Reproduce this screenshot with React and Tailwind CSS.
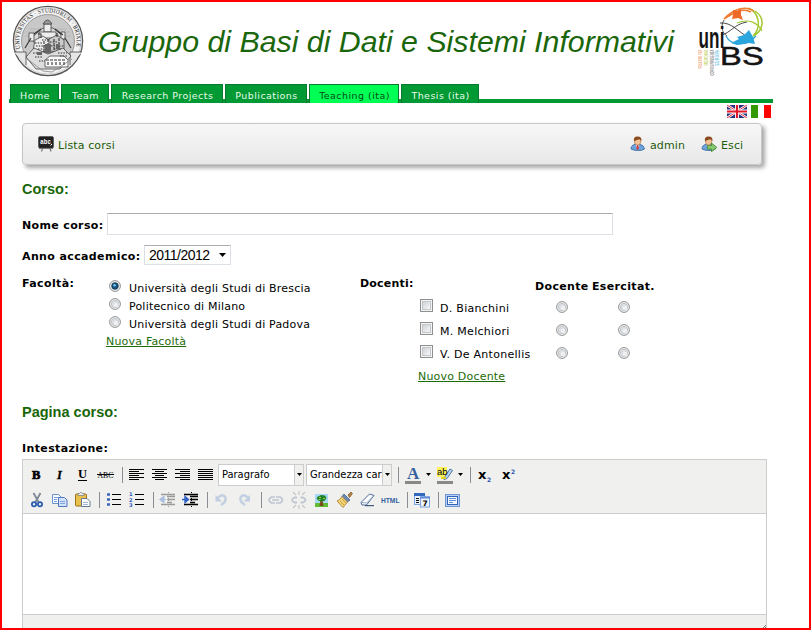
import React from "react";

const VERDANA = "font-['DejaVu_Sans','Noto_Sans',sans-serif]";
const ARIAL = "font-['Liberation_Sans',sans-serif]";

function Seal() {
  return (
    <svg width="72" height="72" viewBox="0 0 72 72">
      <defs>
        <path id="sealRing" d="M 8.7 44.6 A 28.6 28.6 0 1 1 63.3 44.6" />
      </defs>
      <circle cx="36" cy="36" r="34.6" fill="#f2f2f2" stroke="#555" strokeWidth="1.3" />
      <circle cx="36" cy="36" r="33" fill="none" stroke="#bbb" strokeWidth="0.6" />
      <circle cx="36" cy="36" r="26.5" fill="#c8c8c8" stroke="#888" strokeWidth="0.8" />
      <text fontSize="6.2" fill="#222" className="font-['Liberation_Serif',serif]">
        <textPath href="#sealRing" textLength="103" lengthAdjust="spacingAndGlyphs" startOffset="1">UNIVERSITAS · STUDIORUM · BRIXIÆ</textPath>
      </text>
      <path d="M14 27h44M13 31h46M17 24h38" stroke="#b2b2b2" strokeWidth="0.8" />
      <g stroke="#444" strokeWidth="0.8" fill="#ededed">
        <path d="M19 33l12-10h10l12 10-4 6H23z" fill="#dadada" />
        <path d="M32 27v-8h7v8z" />
        <path d="M31 19q4.500-8 9 0z" fill="#999" />
        <path d="M27 33v-6h17v6zM17 36v-8h5v8zM49 34v-7h4v7z" />
        <path d="M21 46l2-11 8-4 7 5v11z" />
        <path d="M37 46V34l8-4 7 5v12z" fill="#ccc" />
        <path d="M2 47h12v13M70 47H58v13" fill="#e6e6e6" />
        <path d="M14 52l8-9 14 6 15-6 8 8-11 13H24z" fill="#ddd" />
        <path d="M33 62v-7l5-4h14l4 4v7z" fill="#fafafa" />
        <path d="M14 53l17 13 9 1 20-13" fill="none" stroke="#888" />
      </g>
      <g stroke="#333" strokeWidth="1.1" fill="none">
        <path d="M23 38h8M24 41h10M26 44h8M38 37h8M39 41h13M42 44h8M30 35h5M21 48h9M23 52h8M27 56h6M46 48h9M48 51h8" strokeDasharray="1.5 1.2" />
        <path d="M36 57v4M40 57v4M44 57v4M48 57v4M52 57v4M34 55h20M32 36v12M36 34v14M42 34v12M47 33v12" strokeDasharray="3 1" />
        <path d="M22 29l7-5M43 24l8 6M19 33l-6 10M53 33l6 10M26 29h3v4M45 28v4" />
      </g>
      <path d="M33 39h6v9h-6zM25 47h5v3h-5zM44 39h3v5h-3z" fill="#666" />
    </svg>
  );
}

function UniBsLogo() {
  return (
    <svg width="72" height="72" viewBox="0 0 72 72">
      <g fill="none">
        <path d="M22 18C34 17 40 27 50 32" stroke="#333" strokeWidth="0.9" />
        <path d="M23 30C33 28 36 19 49 17" stroke="#333" strokeWidth="0.9" />
        <path d="M26 15C23 20 23 27 29 31" stroke="#333" strokeWidth="0.8" />
        <path d="M50 3C61 7 64 22 55 31C64 27 69 14 57 6" stroke="#a4c832" strokeWidth="1.5" />
        <path d="M39 18C51 13 60 18 64 26" stroke="#a4c832" strokeWidth="1.2" />
        <path d="M56 6C48 0 35 4 26 14C34 9 44 2 53 7" stroke="#ef7d32" strokeWidth="1.5" />
        <path d="M28 31C33 41 48 42 58 31" stroke="#2aa5de" strokeWidth="1.3" />
      </g>
      <path d="M35 5l4 1 4-2v6l2 5-5-2-6 1 1-4z" fill="#ee6a28" />
      <path d="M51 25l4 7 2 7-6-1-12 2-6-2 8-4-2-2 7-2z" fill="#2aa5de" />
      <text x="0.5" y="43" fontSize="30" fontWeight="700" fill="#151515" textLength="26" lengthAdjust="spacingAndGlyphs" className="font-['Liberation_Sans',sans-serif]">uni</text>
      <text x="22" y="60" fontSize="25" fill="#151515" stroke="#151515" strokeWidth="0.5" textLength="44" lengthAdjust="spacingAndGlyphs" className="font-['Liberation_Sans',sans-serif]">BS</text>
      <g fontSize="4.6" className="font-['Liberation_Sans',sans-serif]" fontWeight="700">
        <text transform="translate(4.4 63.5) rotate(-90)" fill="#eea678" textLength="19" lengthAdjust="spacingAndGlyphs">PASSATO PER</text>
        <text transform="translate(10 60.5) rotate(-90)" fill="#c5d56a" textLength="16" lengthAdjust="spacingAndGlyphs">MEMORIA</text>
        <text transform="translate(15.800 70.5) rotate(-90)" fill="#8a8a8a" textLength="26" lengthAdjust="spacingAndGlyphs">CORRISPONDENZA</text>
        <text transform="translate(21.400 60.5) rotate(-90)" fill="#7cc6e8" textLength="16" lengthAdjust="spacingAndGlyphs">EUROPA</text>
      </g>
    </svg>
  );
}

function UkFlag() {
  return (
    <svg width="20" height="13" viewBox="0 0 20 13">
      <rect width="20" height="13" fill="#26307a" />
      <path d="M0 0l20 13M20 0L0 13" stroke="#fff" strokeWidth="2.4" />
      <path d="M0 0l20 13M20 0L0 13" stroke="#e0182c" strokeWidth="0.9" />
      <path d="M10 0v13M0 6.5h20" stroke="#fff" strokeWidth="4" />
      <path d="M10 0v13M0 6.5h20" stroke="#e0182c" strokeWidth="2.2" />
    </svg>
  );
}

function BoardIcon() {
  return (
    <svg width="16" height="16" viewBox="0 0 16 16">
      <rect x="0.5" y="0.5" width="15" height="11.5" rx="1.5" fill="#222" stroke="#444" strokeWidth="0.6" />
      <path d="M1 12.5h14M4.500 12.5L3.500 15.500M12 12.5l1 3" stroke="#777" strokeWidth="1.2" />
      <text x="2.300" y="7.500" fontSize="7" fontWeight="700" fill="#fff" textLength="10.500" lengthAdjust="spacingAndGlyphs" className="font-['Liberation_Sans',sans-serif]">abc</text>
      <path d="M12.5 9.5l1.5-1.5" stroke="#fff" />
    </svg>
  );
}

function UserIcon({ leaving }) {
  return (
    <svg width="16" height="16" viewBox="0 0 16 16">
      <path d="M1 13q0-4 4.5-4.800h4Q14 9 14.500 13q-3 2-7 1.500-3.500 0-6.500-1.500z" fill="#6ea3db" stroke="#33659f" strokeWidth="0.8" />
      <path d="M5.500 8.500L7.500 13l2-4.500z" fill="#e6eefa" />
      {!leaving && <path d="M7 9h1.200l.6 3.500-1.200 1.500-1.200-1.500z" fill="#d8323c" />}
      <ellipse cx="7.600" cy="5.300" rx="3.200" ry="3.800" fill="#f3c295" stroke="#a4683a" strokeWidth="0.6" />
      <path d="M4 5.200Q3 .6 7.500.6 12.300.6 11.300 5.200 10.500 3.200 9 3.200 6 4 4 5.200z" fill="#8a4a1c" />
      {leaving && (
        <path d="M6.500 9.500h4V7l5.300 4.400-5.300 4.300v-2.500h-4z" fill="#86c96c" stroke="#3b842c" strokeWidth="0.8" />
      )}
    </svg>
  );
}

function Radio({ checked }) {
  return (
    <svg width="12" height="12" viewBox="0 0 12 12" className="block shrink-0">
      <circle cx="6" cy="6" r="5.400" fill="#f6f6f6" stroke="#8e8f8f" strokeWidth="1" />
      <circle cx="6" cy="6" r="3.700" fill="#dcdfe3" stroke="#b9bdc3" strokeWidth="0.8" />
      <circle cx="7" cy="7" r="2.300" fill="#eff0f1" />
      {checked && <circle cx="6" cy="6" r="3.200" fill="#17547e" stroke="#12344f" strokeWidth="0.8" />}
      {checked && <circle cx="5.500" cy="5.200" r="1.300" fill="#6cc9f0" />}
    </svg>
  );
}

function Checkbox() {
  return (
    <span className="block h-[13px] w-[13px] shrink-0 border border-[#8e8f8f] bg-[#f4f4f4] p-px">
      <span className="block h-full w-full border border-[#c3c7cc] bg-linear-to-br from-[#cdd1d8] to-[#f8f8f8]" />
    </span>
  );
}

function Cell({ children, faded }) {
  return (
    <span className={faded ? "block h-5 w-[23px] opacity-35" : "block h-5 w-[23px]"}>
      <svg width="23" height="20" viewBox="0 0 23 20" className="block">
        {children}
      </svg>
    </span>
  );
}

function Sep() {
  return (
    <span className="flex h-4 w-2 pl-[5px]">
      <span className="block h-4 w-px bg-[#8c8c94]" />
    </span>
  );
}

function Align({ d }) {
  return (
    <Cell>
      <path d={d} stroke="#000" strokeWidth="1" />
    </Cell>
  );
}

function EditorSelect({ label }) {
  return (
    <span className="flex h-[22px] w-[86px] border border-[#ccc] bg-white">
      <span className="w-[75px] overflow-hidden pl-[3px] text-[11px] leading-[20px] tracking-normal whitespace-nowrap [font-stretch:condensed] font-['DejaVu_Sans_Condensed','DejaVu_Sans',sans-serif]">
        {label}
      </span>
      <span className="flex w-[9px] items-center justify-center border-l border-[#ccc] bg-[#f0f0ee]">
        <svg width="5" height="3"><path d="M0 0h5L2.500 3z" /></svg>
      </span>
    </span>
  );
}

function Caret() {
  return <svg width="5" height="3" className="mt-[8px] block"><path d="M0 0h5L2.500 3z" /></svg>;
}

const Serif = "font-['Liberation_Serif',serif]";

function EditorToolbar() {
  return (
    <div className="h-[53px] bg-[#f0f0ee] pt-[2px] pl-[2px] tracking-normal">
      <div className="flex h-[25px] items-center">
        <Cell><text x="7" y="13.500" fontSize="12.500" fontWeight="700" stroke="#000" strokeWidth="0.700" className={Serif}>B</text></Cell>
        <Cell><text x="9" y="13.500" fontSize="12.500" fontWeight="700" fontStyle="italic" stroke="#000" strokeWidth="0.300" className={Serif}>I</text></Cell>
        <Cell>
          <text x="7" y="13" fontSize="12.500" fontWeight="700" className={Serif}>U</text>
          <path d="M7 15.500h9" stroke="#000" />
        </Cell>
        <Cell>
          <text x="3.500" y="12.500" fontSize="9" textLength="16" lengthAdjust="spacingAndGlyphs" className={Serif}>ABC</text>
          <path d="M3 9.500h17" stroke="#000" />
        </Cell>
        <Sep />
        <Align d="M4 4.500h15M4 6.500h10M4 8.500h15M4 10.500h10M4 12.500h15M4 14.500h10" />
        <Align d="M4 4.500h15M7 6.500h9M4 8.500h15M7 10.500h9M4 12.500h15M7 14.500h9" />
        <Align d="M4 4.500h15M9 6.500h10M4 8.500h15M9 10.500h10M4 12.500h15M9 14.500h10" />
        <Align d="M4 4.500h15M4 6.500h15M4 8.500h15M4 10.500h15M4 12.500h15M4 14.500h15" />
        <span className="ml-px flex gap-[2px]">
          <EditorSelect label="Paragrafo" />
          <EditorSelect label="Grandezza carattere" />
        </span>
        <span className="ml-px flex"><Sep /></span>
        <span className="flex w-8 pl-1">
          <svg width="16" height="20" viewBox="0 0 16 20" className="mr-[5px] block">
            <text x="2" y="13.500" fontSize="17" fontWeight="700" fill="#39619f" className={Serif}>A</text>
            <path d="M0 17.500h16" stroke="#888" strokeWidth="3" />
          </svg>
          <Caret />
        </span>
        <span className="flex w-8 pl-1">
          <svg width="17" height="20" viewBox="0 0 17 20" className="mr-1 block">
            <rect x="0" y="2" width="10" height="10" fill="#fbf25c" />
            <path d="M7 13l6-9 2.500 1.500-5.500 8-3 1z" fill="#b6d4f0" stroke="#446b96" strokeWidth="0.900" />
            <path d="M4 13h5" stroke="#e2cd2c" strokeWidth="2" />
            <text x="0" y="9.500" fontSize="9.500" className={ARIAL}>ab</text>
            <path d="M0 17.500h16" stroke="#888" strokeWidth="3" />
          </svg>
          <Caret />
        </span>
        <Sep />
        <Cell>
          <text x="5" y="13.500" fontSize="13" fontWeight="700" className={VERDANA}>x</text>
          <text x="14" y="16.500" fontSize="6" fontWeight="700" fill="#2753b5" className={VERDANA}>2</text>
        </Cell>
        <Cell>
          <text x="6" y="14" fontSize="13" fontWeight="700" className={VERDANA}>x</text>
          <text x="15" y="8.500" fontSize="6" fontWeight="700" fill="#2753b5" className={VERDANA}>2</text>
        </Cell>
      </div>
      <div className="flex h-[26px] items-center">
        <Cell>
          <path d="M8.500 3l5 9M15.500 3l-5 9" stroke="#7d8896" strokeWidth="1.800" />
          <circle cx="9" cy="14.300" r="2.100" fill="none" stroke="#2a5db0" strokeWidth="1.800" />
          <circle cx="15" cy="14.300" r="2.100" fill="none" stroke="#2a5db0" strokeWidth="1.800" />
        </Cell>
        <Cell>
          <path d="M4.500 4.500h6l2.500 2.500v6.500H4.500z" fill="#f4f8ff" stroke="#6c91cc" />
          <path d="M10.500 7.500h6l2.500 2.500v6.500h-8.500z" fill="#d3e3fc" stroke="#4c77be" />
          <path d="M6 7.500h4M6 9.500h3M6 11.500h3M12 11.500h5M12 13.500h5" stroke="#7fa4dc" />
        </Cell>
        <Cell>
          <rect x="4.500" y="4" width="11" height="12" rx="1" fill="#e8c04e" stroke="#9b741b" />
          <path d="M7 5.500V3.500h1.500q1.500-2.500 3 0H13v2z" fill="#eee" stroke="#777" strokeWidth="0.700" />
          <path d="M10.500 8.500h5.500l3 3v5h-8.500z" fill="#fff" stroke="#657891" />
          <path d="M12 12.500h5M12 14.500h5" stroke="#9db7df" />
        </Cell>
        <Sep />
        <Cell>
          <path d="M10 4.500h9M10 9.500h9M10 14.500h9" stroke="#000" />
          <path d="M5 4.500h3M5 9.500h3M5 14.500h3" stroke="#3a66bd" strokeWidth="2.600" />
        </Cell>
        <Cell>
          <path d="M10 4.500h9M10 9.500h9M10 14.500h9" stroke="#000" />
          <g fontSize="5.200" fontWeight="700" fill="#2f5cb8" className={VERDANA}>
            <text x="4" y="6">1</text><text x="4" y="11.500">2</text><text x="4" y="17">3</text>
          </g>
        </Cell>
        <Sep />
        <Cell faded>
          <path d="M5 4.500h14M11 6.500h8M11 9.500h8M11 12.500h5M5 14.500h14" stroke="#000" strokeWidth="1.300" />
          <path d="M12.500 2v16" stroke="#000" strokeDasharray="1 1" />
          <path d="M3.500 9.500L8 6v7zM8 9.500h2" fill="#2f62c4" stroke="#2f62c4" />
        </Cell>
        <Cell>
          <path d="M5 4.500h14M11 6.500h8M11 9.500h8M11 12.500h5M5 14.500h14" stroke="#000" strokeWidth="1.300" />
          <path d="M12.500 2v16" stroke="#000" strokeDasharray="1 1" />
          <path d="M9.500 9.500L6 6.500v6zM3 9.500h3" fill="#2f62c4" stroke="#2f62c4" strokeWidth="1.400" />
        </Cell>
        <Sep />
        <Cell faded>
          <path d="M8 7.500Q13 3 15.500 7.500 16.500 12 11 15" fill="none" stroke="#6c93cd" strokeWidth="2.400" />
          <path d="M5.500 5v6.500h6.500z" fill="#6c93cd" />
        </Cell>
        <Cell faded>
          <path d="M15 7.500Q10 3 7.500 7.500 6.500 12 12 15" fill="none" stroke="#6c93cd" strokeWidth="2.400" />
          <path d="M17 5v6.500h-6.500z" fill="#6c93cd" />
        </Cell>
        <Sep />
        <Cell faded>
          <path d="M11 7H7.500q-5 3 0 6H11M12 7h4q5 3 0 6h-4M8 10h7" fill="none" stroke="#64799c" strokeWidth="1.700" />
        </Cell>
        <Cell faded>
          <path d="M10 7.500H7.500q-5 2.500 0 5H10M13.500 7.500H16q5 2.500 0 5h-2.500" fill="none" stroke="#64799c" strokeWidth="1.800" />
          <path d="M6 2l3 3M12 1v4M18 2l-3 3M6 18l3-3M12 19v-4M18 18l-3-3" stroke="#777" strokeWidth="1.100" />
        </Cell>
        <Cell>
          <rect x="5" y="4" width="13" height="13" fill="#a9d8fb" />
          <rect x="5" y="13" width="13" height="4" fill="#60bd33" />
          <path d="M10.500 10h2l1 6h-4z" fill="#7a4b1c" />
          <path d="M8 6.500l3-1.500 4 .5 1.500 2.500-2 3-4 .5-3-1.500-1-2z" fill="#238225" />
          <path d="M9 7.500h2M13 8.500h2M8.500 9.500h2" stroke="#91d14b" strokeWidth="1.200" />
        </Cell>
        <Cell>
          <path d="M15 5l3-3 1.500 1.500-3 4z" fill="#b38444" stroke="#765125" strokeWidth="0.700" />
          <path d="M11 4l6 6-2.500 2L9 6.500z" fill="#6d89b8" stroke="#3c5680" strokeWidth="0.700" />
          <path d="M9 6.500l5.500 5.500L10 17.500 4 11q3-1 5-4.500z" fill="#f3d575" stroke="#a37b2c" strokeWidth="0.800" />
          <path d="M7 11l4 4M9 9l4 4" stroke="#ba9139" strokeWidth="0.800" />
        </Cell>
        <Cell>
          <path d="M5 12.500L13.500 4l4.500 1.500-7.500 9.500H6z" fill="#fff" stroke="#4d6796" />
          <path d="M5 12.500l5.500.5L18 5.500" fill="none" stroke="#8fa5ca" />
          <path d="M9 15.700h9" stroke="#223b69" />
        </Cell>
        <Cell>
          <text x="2" y="12.500" fontSize="6.500" fontWeight="700" fill="#315f9d" textLength="18.500" lengthAdjust="spacingAndGlyphs" className={ARIAL}>HTML</text>
        </Cell>
        <Sep />
        <Cell>
          <rect x="4.500" y="3.500" width="10" height="11" fill="#eaf1fc" stroke="#7da3dc" />
          <path d="M4 4.500h11" stroke="#3569bd" strokeWidth="3" />
          <path d="M6 8.500h3M6 10.500h3M6 12.500h3" stroke="#111" strokeWidth="1.200" />
          <rect x="10.500" y="7" width="9" height="10" fill="#eef4fd" stroke="#7da3dc" />
          <path d="M10 7.500h10" stroke="#5b8ad4" strokeWidth="2" />
          <text x="12.500" y="15.800" fontSize="7.500" fontWeight="700" className={VERDANA}>7</text>
        </Cell>
        <Sep />
        <Cell>
          <rect x="4.500" y="4.500" width="14" height="12" fill="#b6d1f8" stroke="#6f97d8" />
          <rect x="6.500" y="6.500" width="10" height="8" fill="#f5f9ff" stroke="#3464b4" />
          <path d="M8 8.500h7M8 10.500h7M8 12.500h4" stroke="#5e8ed9" />
        </Cell>
      </div>
    </div>
  );
}

const tabs = [
  { label: "Home", cls: "w-[49px]" },
  { label: "Team", cls: "w-[48px]" },
  { label: "Research Projects", cls: "w-[112px]" },
  { label: "Publications", cls: "w-[82px]" },
  { label: "Teaching (ita)", cls: "w-[90px]", active: true },
  { label: "Thesis (ita)", cls: "w-[78px]" },
];

function Tab({ label, cls, active }) {
  const tone = active ? "bg-[#00ff55] text-[#064a1a]" : "bg-[#009933] text-[#e8fbe8]";
  return (
    <a className={`${cls} ${tone} block h-[19px] border border-b-0 border-[#087a2d] pt-[3px] pl-px text-center text-[9.5px] leading-[15px] tracking-[0.45px] whitespace-nowrap`}>
      {label}
    </a>
  );
}

const faculties = ["Università degli Studi di Brescia", "Politecnico di Milano", "Università degli Studi di Padova"];
const teachers = ["D. Bianchini", "M. Melchiori", "V. De Antonellis"];

export default function App() {
  return (
    <div className={`${VERDANA} h-[630px] w-[811px] overflow-hidden border-2 border-[#ff0000] bg-white text-[11px] leading-[14px] tracking-[0.2px] text-black`}>
      <header className="flex h-[82px] pt-[3px] pl-[10px]">
        <Seal />
        <h1 className={`${ARIAL} ml-[14px] w-[600px] pt-[18px] text-[30.3px] leading-[38px] tracking-normal whitespace-nowrap text-[#1a660a] italic`}>
          Gruppo di Basi di Dati e Sistemi Informativi
        </h1>
        <UniBsLogo />
      </header>

      <nav className="ml-[7px] flex h-[19px] w-[764px] gap-[2px] bg-[linear-gradient(#009933,#009933)] bg-[length:100%_4px] bg-bottom bg-no-repeat pl-px">
        {tabs.map((t) => <Tab key={t.label} {...t} />)}
      </nav>

      <div className="flex h-5 w-[769px] justify-end gap-1 pt-[2px]">
        <UkFlag />
        <span className="flex h-[13px] w-5 bg-white">
          <span className="w-[7px] bg-[#339900]" />
          <span className="w-[6px]" />
          <span className="w-[7px] bg-[#ff0000]" />
        </span>
      </div>

      <main className="pl-5">
        <div className="flex h-[42px] w-[740px] items-center rounded-[4px] border border-[#c6c6c6] bg-linear-to-b from-[#f7f7f7] to-[#e8e8e8] pl-[15px] tracking-[0.12px] text-[#1e5c0a] shadow-[3px_3px_4px_rgba(0,0,0,0.35)]">
          <BoardIcon />
          <span className="ml-1 w-[572px] pt-[3px]">Lista corsi</span>
          <UserIcon />
          <span className="ml-1 w-[51px] pt-[3px]">admin</span>
          <UserIcon leaving />
          <span className="ml-1 pt-[3px]">Esci</span>
        </div>

        <h2 className={`${ARIAL} mt-[15px] text-[14.5px] leading-[18px] font-bold tracking-normal text-[#1a660a]`}>Corso:</h2>

        <div className="mt-[15px] flex h-[22px]">
          <label className="w-[85px] pt-[6px] font-bold tracking-[0.36px] whitespace-nowrap">Nome corso:</label>
          <span className="block w-[506px] border border-[#dbdfe6] border-t-[#abadb3] bg-white" />
        </div>

        <div className="mt-[10px] flex h-5">
          <label className="w-[122px] pt-[5px] font-bold tracking-[0.38px] whitespace-nowrap">Anno accademico:</label>
          <span className={`${ARIAL} flex w-[87px] items-center justify-between border border-[#dbdfe6] border-t-[#abadb3] pr-1 pl-1 text-[14px] tracking-[-0.5px]`}>
            2011/2012
            <svg width="7" height="4"><path d="M0 0h7L3.500 4z" /></svg>
          </span>
        </div>

        <div className="mt-[11px] flex h-[107px]">
          <div className="w-[84px] pt-px font-bold tracking-[0.38px]">Facoltà:</div>
          <div className="w-[254px] pt-px">
            {faculties.map((f, i) => (
              <div key={f} className="flex h-[18px] pl-[3px]">
                <span className="mt-[3px] mr-2"><Radio checked={i === 0} /></span>
                <span className="pt-[5px] whitespace-nowrap">{f}</span>
              </div>
            ))}
            <a className="mt-1 block text-[#1e6b0a] underline">Nuova Facoltà</a>
          </div>
          <div className="w-[58px] pt-px font-bold whitespace-nowrap">Docenti:</div>
          <div className="pt-1">
            <div className="flex h-4 pl-[117px] font-bold tracking-[0.35px]">
              <span className="w-[57px]">Docente</span>
              <span>Esercitat.</span>
            </div>
            {teachers.map((t) => (
              <div key={t} className="flex h-[23px] pl-[2px]">
                <span className="mt-[3px]"><Checkbox /></span>
                <span className="ml-[7px] w-[116px] pt-[6px] tracking-[0.28px] whitespace-nowrap">{t}</span>
                <span className="w-[62px] pt-[5px]"><Radio /></span>
                <span className="pt-[5px]"><Radio /></span>
              </div>
            ))}
            <a className="mt-[5px] block text-[#1e6b0a] underline">Nuovo Docente</a>
          </div>
        </div>

        <h2 className={`${ARIAL} mt-5 text-[14.5px] leading-[18px] font-bold tracking-normal text-[#1a660a]`}>Pagina corso:</h2>
        <div className="mt-[21px] font-bold tracking-[0.38px]">Intestazione:</div>

        <section className="mt-[3px] w-[745px] border border-[#ccc] bg-[#f0f0ee]">
          <EditorToolbar />
          <div className="h-[102px] border-y border-[#ccc] bg-white" />
          <div className="flex h-5 items-start justify-end pt-[10px]">
            <svg width="4" height="4"><path d="M0 4l4-4M2 4l2-2" stroke="#777" /></svg>
          </div>
        </section>
      </main>
    </div>
  );
}
